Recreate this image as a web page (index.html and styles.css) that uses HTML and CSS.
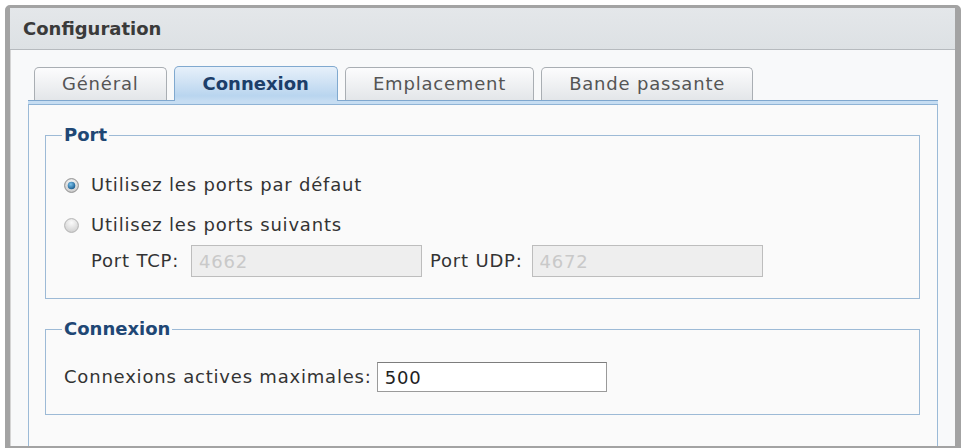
FILE: index.html
```html
<!DOCTYPE html>
<html lang="fr">
<head>
<meta charset="utf-8">
<title>Configuration</title>
<link rel="stylesheet" href="styles.css">
</head>
<body>
<div class="window">
  <div class="header">Configuration</div>
  <div class="body">
    <div class="tabs">
      <div class="tab">Général</div>
      <div class="tab active">Connexion</div>
      <div class="tab">Emplacement</div>
      <div class="tab">Bande passante</div>
    </div>
    <div class="panel">
      <div class="bar"></div>
      <div class="panel-inner">
        <fieldset class="group port">
          <legend>Port</legend>
          <label class="row">
            <svg class="radio" width="15" height="15" viewBox="0 0 15 15">
              <defs>
                <radialGradient id="ring" cx="50%" cy="35%" r="65%">
                  <stop offset="0" stop-color="#ffffff"/>
                  <stop offset="1" stop-color="#c9c9c9"/>
                </radialGradient>
                <radialGradient id="dot" cx="40%" cy="35%" r="70%">
                  <stop offset="0" stop-color="#7cc3ec"/>
                  <stop offset="1" stop-color="#14568a"/>
                </radialGradient>
              </defs>
              <circle cx="7.5" cy="7.5" r="6.9" fill="url(#ring)" stroke="#8f8f8f" stroke-width="1"/>
              <circle cx="7.5" cy="7.5" r="3.8" fill="url(#dot)"/>
            </svg>
            <span>Utilisez les ports par défaut</span>
          </label>
          <label class="row">
            <svg class="radio" width="15" height="15" viewBox="0 0 15 15">
              <defs>
                <radialGradient id="ring2" cx="50%" cy="30%" r="70%">
                  <stop offset="0" stop-color="#fbfbfb"/>
                  <stop offset="1" stop-color="#cfcfcf"/>
                </radialGradient>
              </defs>
              <circle cx="7.5" cy="7.5" r="6.9" fill="url(#ring2)" stroke="#b3b3b3" stroke-width="1"/>
            </svg>
            <span>Utilisez les ports suivants</span>
          </label>
          <div class="ports">
            <span class="lbl">Port TCP:</span>
            <input class="field disabled" type="text" value="4662" disabled>
            <span class="lbl lbl-udp">Port UDP:</span>
            <input class="field disabled" type="text" value="4672" disabled>
          </div>
        </fieldset>
        <fieldset class="group conn">
          <legend>Connexion</legend>
          <div class="conn-row">
            <span class="lbl">Connexions actives maximales:</span>
            <input class="field active-field" type="text" value="500">
          </div>
        </fieldset>
      </div>
    </div>
  </div>
</div>
</body>
</html>
```
FILE: styles.css
```css
html, body {
  margin: 0;
  padding: 0;
}
body {
  background: #ffffff;
  font-family: "DejaVu Sans", Verdana, sans-serif;
  font-size: 18px;
  line-height: 20px;
  letter-spacing: 0.8px;
  color: #333333;
  overflow: hidden;
}
.window {
  margin: 5px 0 0 5px;
  width: 945px;
  height: 438px;
  border-style: solid;
  border-color: #a3a3a3;
  border-width: 3px 6px 2px 5px;
  border-radius: 5px 5px 0 0;
  background: #f8f9fa;
  box-shadow: inset 1px 0 0 #d4d4d4;
  overflow: hidden;
  display: flex;
  flex-direction: column;
}
.header {
  height: 41px;
  flex: none;
  background: linear-gradient(#e4e7ea, #dde1e4);
  border-bottom: 1px solid #b6babe;
  padding-left: 13px;
  display: flex;
  align-items: center;
  font-weight: bold;
  letter-spacing: 0;
  color: #3a3a3a;
}
.body {
  flex: 1;
  display: flex;
  flex-direction: column;
  padding: 16px 17px 0 18px;
}
.tabs {
  display: flex;
  align-items: flex-end;
  gap: 7px;
  padding-left: 6px;
  height: 34px;
  position: relative;
  z-index: 1;
}
.tab {
  height: 32px;
  box-sizing: content-box;
  border: 1px solid #a9aeb3;
  border-bottom: none;
  border-radius: 5px 5px 0 0;
  background: linear-gradient(#fcfcfd, #e3e6e9);
  padding: 0 27px;
  display: flex;
  align-items: center;
  color: #555555;
}
.tab.active {
  height: 34px;
  margin-bottom: -1px;
  border-color: #80a9cf;
  background: linear-gradient(#e6f0fa 0%, #cfe2f4 45%, #b9d5ef 85%, #c6ddf2 100%);
  color: #1c3e69;
  font-weight: bold;
  letter-spacing: 0;
  padding: 0 28px;
}
.panel {
  flex: 1;
  display: flex;
  flex-direction: column;
  border-left: 1px solid #9bbad7;
  border-right: 1px solid #9bbad7;
  background: #fafafa;
}
.bar {
  height: 3px;
  flex: none;
  margin: 0 -1px;
  background: #c6ddf2;
  border-top: 1px solid #7fa7ce;
  border-bottom: 1px solid #8fb3d5;
}
.panel-inner {
  padding: 20px 17px 0 16px;
}
.group {
  margin: 0;
  border: 1px solid #9dbad6;
  padding: 20px 0 0 18px;
}
.group legend {
  padding: 0 2px;
  margin-left: -2px;
  font-weight: bold;
  letter-spacing: 0;
  line-height: 20px;
  color: #1f4775;
}
.port {
  padding-bottom: 21px;
}
.row {
  height: 40px;
  display: flex;
  align-items: center;
}
.radio {
  flex: none;
  margin-right: 12px;
}
.ports {
  display: flex;
  align-items: center;
  padding-left: 27px;
  height: 32px;
}
.lbl {
  margin-right: 12px;
}
.ports .lbl-udp {
  margin-right: 9px;
}
.field {
  box-sizing: border-box;
  height: 32px;
  width: 231px;
  font-family: inherit;
  font-size: 18px;
  letter-spacing: 0.8px;
  padding: 0 7px;
  margin: 0 8px 0 0;
  outline: none;
}
.field.disabled {
  background: #eeeeee;
  border: 1px solid #bdbdbd;
  color: #c9c9c9;
}
.conn {
  margin-top: 20px;
  padding-top: 23px;
  padding-bottom: 22px;
}
.conn-row {
  display: flex;
  align-items: center;
}
.conn-row .lbl {
  margin-right: 5px;
}
.active-field {
  height: 30px;
  width: 230px;
  background: #ffffff;
  border: 1px solid #9a9a9a;
  border-top-color: #7d7d7d;
  color: #222222;
}
```
